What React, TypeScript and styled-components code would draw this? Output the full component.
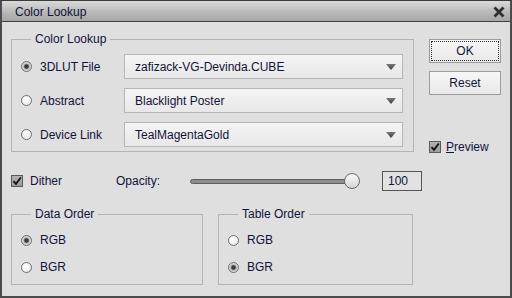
import React, { useState } from 'react';
import styled, { createGlobalStyle } from 'styled-components';

const GlobalStyle = createGlobalStyle`
  html, body {
    margin: 0;
    padding: 0;
    background: #dfdfdf;
  }
  body {
    font-family: "Liberation Sans", Arial, sans-serif;
    font-size: 12px;
    color: #12123a;
  }
`;

const Window = styled.div`
  box-sizing: border-box;
  width: 512px;
  height: 298px;
  display: flex;
  flex-direction: column;
  border: 2px solid #4c4c4c;
  border-top: 1px solid #3a3a3a;
  background: #dfdfdf;
`;

const TitleBar = styled.div`
  box-sizing: border-box;
  height: 21px;
  display: flex;
  align-items: center;
  justify-content: space-between;
  padding: 2px 5px 0 13px;
  background: linear-gradient(#dadada, #b6b6b6 60%, #a6a6a6);
  border-bottom: 1px solid #404040;
  font-size: 12px;
`;

const Body = styled.div`
  flex: 1;
  display: flex;
  flex-direction: column;
  padding: 10px 0 0 9px;
`;

const TopRow = styled.div`
  display: flex;
  align-items: stretch;
`;

const Group = styled.fieldset<{ $width: number }>`
  box-sizing: border-box;
  width: ${p => p.$width}px;
  margin: 0;
  padding: 0 9px 0 9px;
  border: 1px solid #b4b4b4;
  min-inline-size: 0;
`;

const Legend = styled.legend`
  margin-left: 10px;
  padding: 0 4px;
  line-height: 14px;
  font-size: 12px;
`;

const LookupGrid = styled.div`
  display: grid;
  grid-template-columns: 103px 279px;
  row-gap: 9px;
  align-items: center;
  padding: 8px 0 4px;
`;

const Choice = styled.label`
  display: flex;
  align-items: center;
  gap: 8px;
  line-height: 16px;
  white-space: nowrap;
`;

const RadioDot = styled.span<{ $on?: boolean }>`
  box-sizing: border-box;
  width: 11px;
  height: 11px;
  border-radius: 50%;
  border: 1px solid #6e6e6e;
  background: ${p =>
    p.$on
      ? 'radial-gradient(circle, #3a3a3a 0 1.6px, #7a7a7a 2.3px, #c9c9c9 3.2px, #efefef 100%)'
      : 'radial-gradient(circle at 40% 35%, #ffffff, #ececec 70%, #d8d8d8)'};
  flex-shrink: 0;
`;

const Select = styled.div`
  box-sizing: border-box;
  height: 25px;
  display: flex;
  align-items: center;
  justify-content: space-between;
  padding: 0 6px 0 10px;
  border: 1px solid #b6b6b6;
  background: linear-gradient(#f4f4f4, #e8e8e8);
`;

const Side = styled.div`
  display: flex;
  flex-direction: column;
  gap: 8px;
  width: 72px;
  margin-left: 15px;
  padding-top: 7px;
`;

const Button = styled.button<{ $focus?: boolean }>`
  box-sizing: border-box;
  width: 72px;
  height: 24px;
  padding: 0;
  font-family: inherit;
  font-size: 12px;
  color: inherit;
  border: 1px solid #9c9c9c;
  background: linear-gradient(#f6f6f6, #e9e9e9);
  outline: ${p => (p.$focus ? '1px dotted #333' : 'none')};
  outline-offset: -3px;
`;

const PreviewRow = styled.label`
  margin-top: auto;
  display: flex;
  align-items: center;
  gap: 5px;
  line-height: 14px;
  margin-bottom: -2px;
`;

const Underline = styled.span`
  text-decoration: underline;
`;

const Box = styled.span`
  box-sizing: border-box;
  width: 12px;
  height: 12px;
  border: 1px solid #5a5a5a;
  background: linear-gradient(#b2b2b2, #9c9c9c);
  display: flex;
  align-items: center;
  justify-content: center;
  flex-shrink: 0;
`;

const DitherRow = styled.div`
  display: flex;
  align-items: center;
  height: 20px;
  margin-top: 19px;
`;

const DitherLabel = styled.label`
  display: flex;
  align-items: center;
  gap: 7px;
  width: 105px;
`;

const OpacityLabel = styled.span`
  width: 74px;
`;

const Track = styled.div`
  position: relative;
  box-sizing: border-box;
  width: 166px;
  height: 5px;
  border: 1px solid #5e5e5e;
  border-radius: 3px;
  background: #8e8e8e;
`;

const Thumb = styled.div`
  position: absolute;
  top: -7px;
  box-sizing: border-box;
  width: 16px;
  height: 16px;
  border-radius: 50%;
  border: 1px solid #6a6a6a;
  background: linear-gradient(#fafafa, #d4d4d4);
`;

const NumberBox = styled.div`
  box-sizing: border-box;
  width: 40px;
  height: 20px;
  margin-left: 26px;
  padding-left: 5px;
  line-height: 18px;
  border: 1px solid #555;
  background: #e2e2e2;
`;

const BottomRow = styled.div`
  display: flex;
  gap: 15px;
  margin-top: 16px;
`;

const RadioStack = styled.div`
  display: flex;
  flex-direction: column;
  gap: 11px;
  padding: 11px 0 9px;
`;

function Radio({ on, label }: { on?: boolean; label: string }) {
  return (
    <Choice>
      <RadioDot $on={on} />
      {label}
    </Choice>
  );
}

function Check() {
  return (
    <Box>
      <svg width="10" height="10" viewBox="0 0 10 10">
        <path d="M1.5 5.2 L4 7.8 L8.8 1.5" fill="none" stroke="#111" strokeWidth="1.8" />
      </svg>
    </Box>
  );
}

function Arrow() {
  return (
    <svg width="10" height="6" viewBox="0 0 10 6">
      <defs>
        <linearGradient id="ag" x1="0" y1="0" x2="0" y2="1">
          <stop offset="0" stopColor="#7a7a7a" />
          <stop offset="1" stopColor="#3a3a3a" />
        </linearGradient>
      </defs>
      <path d="M0 0 H10 L5 6 Z" fill="url(#ag)" />
    </svg>
  );
}

export default function App() {
  const [opacity] = useState(100);
  const lookups = [
    { label: '3DLUT File', value: 'zafizack-VG-Devinda.CUBE', on: true },
    { label: 'Abstract', value: 'Blacklight Poster', on: false },
    { label: 'Device Link', value: 'TealMagentaGold', on: false },
  ];

  return (
    <>
      <GlobalStyle />
      <Window>
        <TitleBar>
          <span>Color Lookup</span>
          <svg width="12" height="12" viewBox="0 0 12 12">
            <path d="M1.5 1.5 L10.5 10.5 M10.5 1.5 L1.5 10.5" stroke="#2e2e2e" strokeWidth="2.8" />
          </svg>
        </TitleBar>
        <Body>
          <TopRow>
            <Group $width={403}>
              <Legend>Color Lookup</Legend>
              <LookupGrid>
                {lookups.map((l, idx) => (
                  <React.Fragment key={idx}>
                    <Radio on={l.on} label={l.label} />
                    <Select>
                      <span>{l.value}</span>
                      <Arrow />
                    </Select>
                  </React.Fragment>
                ))}
              </LookupGrid>
            </Group>
            <Side>
              <Button $focus>OK</Button>
              <Button>Reset</Button>
              <PreviewRow>
                <Check />
                <span>
                  <Underline>P</Underline>review
                </span>
              </PreviewRow>
            </Side>
          </TopRow>
          <DitherRow>
            <DitherLabel>
              <Check />
              Dither
            </DitherLabel>
            <OpacityLabel>Opacity:</OpacityLabel>
            <Track>
              <Thumb style={{ left: `${(opacity / 100) * 166 - 13}px` }} />
            </Track>
            <NumberBox>{opacity}</NumberBox>
          </DitherRow>
          <BottomRow>
            <Group $width={192}>
              <Legend>Data Order</Legend>
              <RadioStack>
                <Radio on label="RGB" />
                <Radio label="BGR" />
              </RadioStack>
            </Group>
            <Group $width={195}>
              <Legend>Table Order</Legend>
              <RadioStack>
                <Radio label="RGB" />
                <Radio on label="BGR" />
              </RadioStack>
            </Group>
          </BottomRow>
        </Body>
      </Window>
    </>
  );
}
